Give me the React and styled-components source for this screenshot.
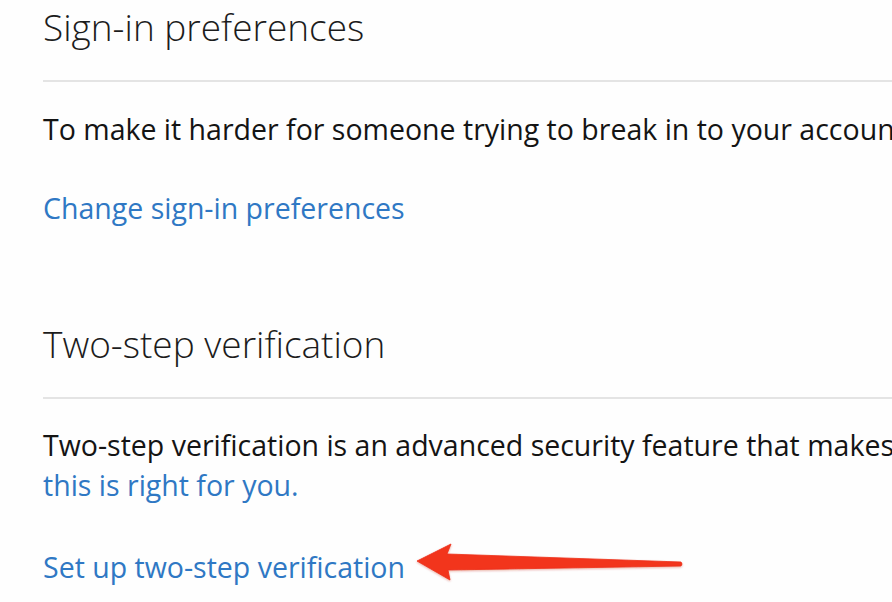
import React from "react";
import styled, { createGlobalStyle } from "styled-components";

const Global = createGlobalStyle`
  html, body { margin: 0; padding: 0; background: #fefefe; }
  body { font-family: "Open Sans", "Noto Sans", sans-serif; overflow: hidden; }
`;

const Page = styled.div`
  width: 892px;
  height: 602px;
  overflow: hidden;
  padding: 4px 0 0 43px;
  box-sizing: border-box;
`;

const Section = styled.section`
  display: flex;
  flex-direction: column;
  margin-top: ${(p) => p.$top}px;
`;

const Heading = styled.h2`
  margin: 0;
  font-family: "Open Sans", sans-serif;
  font-weight: 300;
  font-size: 37px;
  line-height: 46px;
  color: #1c1c1c;
  white-space: nowrap;
`;

const Divider = styled.hr`
  border: none;
  height: 2px;
  background: #e4e4e4;
  margin: 30px 0 0 0;
  width: calc(100% + 43px);
`;

const Text = styled.p`
  margin: ${(p) => p.$top}px 0 0 0;
  font-size: 28.5px;
  line-height: ${(p) => p.$lh || 40}px;
  color: #141414;
  white-space: nowrap;
`;

const Link = styled.a`
  color: #2f78c4;
  text-decoration: none;
  font-size: 28.5px;
  line-height: ${(p) => p.$lh || 40}px;
  white-space: nowrap;
`;

const ActionRow = styled.div`
  display: flex;
  align-items: flex-start;
  gap: 11px;
  margin-top: ${(p) => p.$top}px;
`;

const ArrowSvg = styled.svg`
  flex: none;
  margin-top: -5px;
  overflow: visible;
`;

const Arrow = () => (
  <ArrowSvg width="270" height="42" viewBox="0 0 270 42">
    <defs>
      <filter id="glow" x="-10%" y="-50%" width="120%" height="200%">
        <feGaussianBlur in="SourceAlpha" stdDeviation="0.8" />
        <feOffset dx="0" dy="0.5" result="b" />
        <feFlood floodColor="#c02010" floodOpacity="0.35" />
        <feComposite in2="b" operator="in" />
        <feMerge>
          <feMergeNode />
          <feMergeNode in="SourceGraphic" />
        </feMerge>
      </filter>
    </defs>
    <path
      d="M1 19 L35 2 L31 12 L265 20 Q267 22 265 24 L32 28 L34 38 Z"
      fill="#f2341d"
      stroke="#ee321c"
      strokeWidth="0.8"
      strokeLinejoin="round"
      filter="url(#glow)"
    />
  </ArrowSvg>
);

export default function App() {
  return (
    <>
      <Global />
      <Page>
        <Section $top={0}>
          <Heading>Sign-in preferences</Heading>
          <Divider />
          <Text $top={27}>
            To make it harder for someone trying to break in to your account, we'll ask for additional security info
          </Text>
          <ActionRow $top={39}>
            <Link href="#">Change sign-in preferences</Link>
          </ActionRow>
        </Section>
        <Section $top={93}>
          <Heading>Two-step verification</Heading>
          <Divider />
          <Text $top={26} $lh={40}>
            Two-step verification is an advanced security feature that makes it harder for someone
            <br />
            <Link href="#" $lh={40}>this is right for you.</Link>
          </Text>
          <ActionRow $top={42}>
            <Link href="#">Set up two-step verification</Link>
            <Arrow />
          </ActionRow>
        </Section>
      </Page>
    </>
  );
}
